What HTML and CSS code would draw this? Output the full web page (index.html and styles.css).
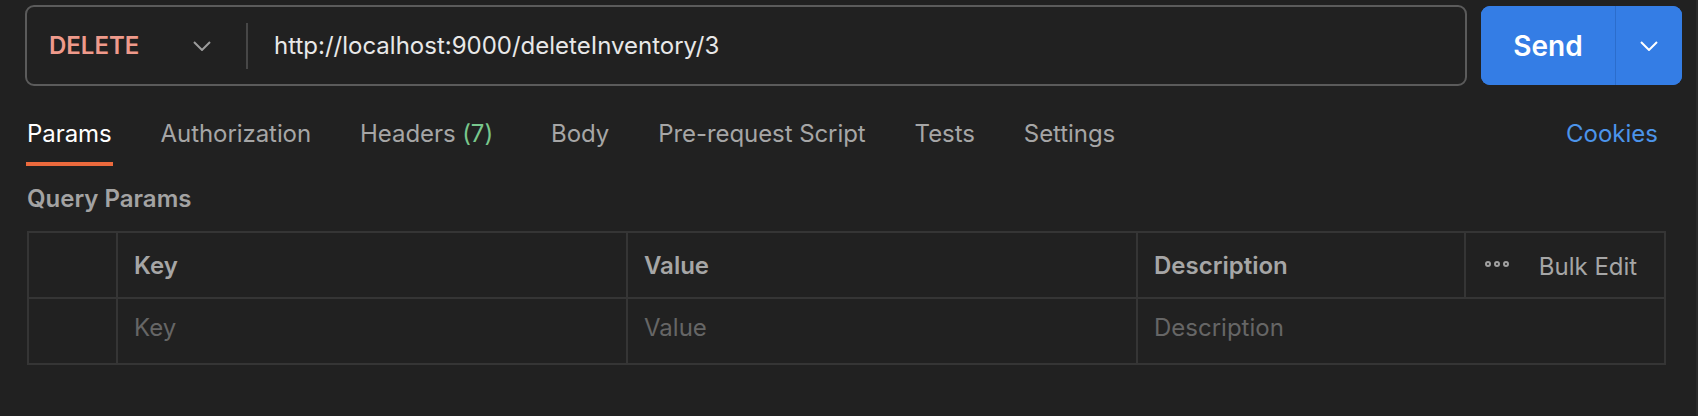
FILE: index.html
```html
<!DOCTYPE html>
<html lang="en">
<head>
<meta charset="utf-8">
<title>DELETE request</title>
<link rel="stylesheet" href="styles.css">
</head>
<body>
<div class="app">
  <div class="request-bar">
    <div class="url-box">
      <div class="method">
        <span class="method-name">DELETE</span>
        <svg class="chev chev-method" width="18" height="10" viewBox="0 0 18 10"><path d="M1 1l8 8 8-8" fill="none" stroke="currentColor" stroke-width="2"/></svg>
      </div>
      <div class="url-sep"></div>
      <div class="url-text">http://localhost:9000/deleteInventory/3</div>
    </div>
    <div class="send-group">
      <button class="send-main">Send</button>
      <button class="send-drop">
        <svg class="chev" width="18" height="10" viewBox="0 0 18 10"><path d="M1 1l8 8 8-8" fill="none" stroke="currentColor" stroke-width="2"/></svg>
      </button>
    </div>
  </div>

  <nav class="tabs">
    <span class="tab active">Params</span>
    <span class="tab">Authorization</span>
    <span class="tab tab-headers">Headers <span class="count">(7)</span></span>
    <span class="tab">Body</span>
    <span class="tab">Pre-request Script</span>
    <span class="tab">Tests</span>
    <span class="tab">Settings</span>
    <span class="cookies">Cookies</span>
  </nav>

  <div class="section-title">Query Params</div>

  <table class="params">
    <colgroup>
      <col class="c-check"><col class="c-key"><col class="c-value"><col class="c-desc"><col class="c-actions">
    </colgroup>
    <thead>
      <tr>
        <th></th>
        <th>Key</th>
        <th>Value</th>
        <th>Description</th>
        <th class="actions">
          <span class="dots"><i></i><i></i><i></i></span>
          <span class="bulk">Bulk Edit</span>
        </th>
      </tr>
    </thead>
    <tbody>
      <tr>
        <td></td>
        <td class="ph">Key</td>
        <td class="ph">Value</td>
        <td class="ph" colspan="2">Description</td>
      </tr>
    </tbody>
  </table>
</div>
</body>
</html>
```

FILE: styles.css
```css
* { box-sizing: border-box; }

html, body {
  margin: 0;
  padding: 0;
  background: #212121;
}

body {
  font-family: Inter, "Noto Sans", "Liberation Sans", sans-serif;
  color: #a6a6a6;
  font-size: 24px;
}

.app {
  width: 1698px;
  height: 416px;
  border-right: 2px solid #2a2a2a;
  padding-top: 5px;
}

/* request bar */
.request-bar {
  display: flex;
  align-items: center;
  gap: 14px;
  margin: 0 14px 0 25px;
  height: 81px;
}

.url-box {
  flex: 1;
  height: 81px;
  border: 2px solid #5b5b5b;
  border-radius: 9px;
  display: flex;
  align-items: center;
}

.method {
  width: 219px;
  padding: 0 35px 0 22px;
  display: flex;
  align-items: center;
  justify-content: space-between;
}

.method-name {
  color: #ef9a8b;
  font-weight: 600;
  font-size: 24px;
}

.chev { display: block; }
.chev-method { color: #9c9c9c; }

.url-sep {
  width: 2px;
  height: 46px;
  background: #474747;
}

.url-text {
  margin-left: 26px;
  color: #e8e8e8;
  font-size: 24px;
}

.send-group {
  display: flex;
  height: 79px;
  width: 201px;
  border-radius: 9px;
  overflow: hidden;
  background: #347de5;
}

.send-group button {
  border: 0;
  background: #347de5;
  color: #ffffff;
  font-family: inherit;
  padding: 0;
  display: flex;
  align-items: center;
  justify-content: center;
}

.send-main {
  width: 135px;
  font-size: 28px;
  font-weight: 600;
  border-right: 1px solid #2b6dcc !important;
}

.send-drop {
  flex: 1;
}

/* tabs */
.tabs {
  display: flex;
  align-items: flex-end;
  gap: 47px;
  margin: 33px 38px 0 26px;
}

.tab {
  font-size: 24px;
  line-height: 29px;
  letter-spacing: -0.07px;
  padding: 0 1px 14px;
  border-bottom: 4px solid transparent;
  color: #a6a6a6;
  white-space: nowrap;
}

.tab.active {
  color: #ffffff;
  border-bottom-color: #ec6a3d;
}

.tab-headers { margin-right: 9px; }

.count { color: #79c78d; }

.cookies {
  margin-left: auto;
  font-size: 24px;
  line-height: 29px;
  padding-bottom: 18px;
  color: #4c94ea;
}

.section-title {
  margin: 18px 0 0 27px;
  font-size: 24px;
  line-height: 29px;
  font-weight: 600;
  color: #a3a3a3;
}

/* params table */
.params {
  margin: 18px 0 0 27px;
  width: 1637px;
  border-collapse: collapse;
  table-layout: fixed;
  border: 2px solid #353535;
}

.c-check { width: 89px; }
.c-key { width: 510px; }
.c-value { width: 510px; }
.c-desc { width: 328px; }
.c-actions { width: 200px; }

.params th,
.params td {
  height: 66px;
  border: 2px solid #353535;
  padding: 0 16px;
  text-align: left;
  font-size: 24px;
  vertical-align: middle;
}

.params th {
  font-weight: 600;
  color: #a6a6a6;
}

.params td.ph {
  color: #666666;
  font-weight: 400;
  padding-bottom: 7px;
}

.params th.actions {
  padding-left: 19px;
  font-weight: 400;
  white-space: nowrap;
}

.dots {
  display: inline-flex;
  gap: 3px;
  vertical-align: middle;
  margin-right: 23px;
  position: relative;
  top: -2px;
}

.dots i {
  display: block;
  width: 6px;
  height: 6px;
  border: 2px solid #a0a0a0;
  border-radius: 50%;
}

.bulk {
  color: #a6a6a6;
  vertical-align: middle;
}
```
